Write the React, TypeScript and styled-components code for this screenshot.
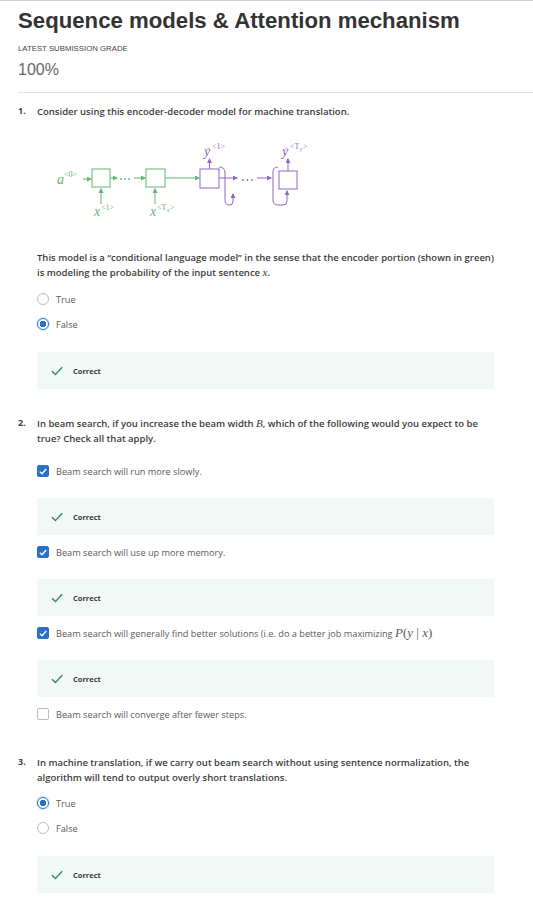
import styled, { createGlobalStyle } from 'styled-components';

const GlobalStyle = createGlobalStyle`
	html, body {
		margin: 0;
		padding: 0;
		background: #fff;
	}
	body {
		font-family: 'Open Sans', 'Liberation Sans', sans-serif;
		color: #333;
	}
`;

const Page = styled.div`
	width: 533px;
	border-top: 1px solid #cfcfcf;
	padding-bottom: 12px;
`;

const Header = styled.header`
	padding: 5px 0 0 18px;
	display: flex;
	flex-direction: column;
	font-family: 'Liberation Sans', Arial, sans-serif;
`;

const Title = styled.h1`
	margin: 0;
	font-size: 22.2px;
	line-height: 29px;
	font-weight: 700;
	color: #333;
`;

const GradeLabel = styled.span`
	margin-top: 9px;
	font-size: 7.8px;
	line-height: 10px;
	text-transform: uppercase;
	color: #444;
`;

const Grade = styled.span`
	margin-top: 6px;
	font-size: 16px;
	line-height: 20px;
	color: #666;
`;

const Divider = styled.hr`
	border: none;
	border-top: 1px solid #e2e2e2;
	margin: 12px 0 0 18px;
`;

const Question = styled.section<{ $gap: number }>`
	display: grid;
	grid-template-columns: 19px 457px;
	padding-left: 18px;
	margin-top: ${({ $gap }) => $gap}px;
`;

const Number = styled.span`
	font-size: 9px;
	font-weight: 700;
	line-height: 14px;
	color: #444;
`;

const Body = styled.div`
	display: flex;
	flex-direction: column;
`;

const Prompt = styled.p<{ $gap?: number }>`
	margin: ${({ $gap }) => $gap ?? 0}px 0 0;
	font-size: 9.5px;
	font-weight: 600;
	line-height: 15px;
	color: #3b3b3b;
`;

const MathVar = styled.span<{ $size?: number }>`
	font-family: 'Liberation Serif', 'Times New Roman', serif;
	font-style: italic;
	font-weight: 400;
	line-height: 1;
	font-size: ${({ $size }) => $size ?? 11}px;
`;

const MathUp = styled.span`
	font-family: 'Liberation Serif', 'Times New Roman', serif;
	font-weight: 400;
	line-height: 1;
	font-size: 13px;
`;

const Diagram = styled.svg`
	display: block;
	margin-top: 17px;
`;

const Options = styled.div<{ $gap: number }>`
	display: flex;
	flex-direction: column;
	gap: 9px;
	margin-top: ${({ $gap }) => $gap}px;
`;

const Option = styled.label`
	display: flex;
	align-items: center;
	gap: 7px;
	height: 16px;
	font-size: 9.2px;
	color: #5a5a5a;
`;

const Radio = styled.span<{ $checked?: boolean }>`
	box-sizing: border-box;
	width: 12px;
	height: 12px;
	border-radius: 50%;
	border: ${({ $checked }) => ($checked ? '1.5px solid #2c6fc9' : '1px solid #bdbdbd')};
	background: ${({ $checked }) => ($checked ? 'radial-gradient(circle, #2c6fc9 0 3px, #fff 3.4px)' : '#fff')};
	box-shadow: ${({ $checked }) => ($checked ? '0 0 0 1px #d6e4f7' : 'none')};
	flex-shrink: 0;
`;

const Checkbox = styled.span<{ $checked?: boolean }>`
	box-sizing: border-box;
	width: 12px;
	height: 12px;
	border-radius: 2px;
	border: 1px solid ${({ $checked }) => ($checked ? '#2c6fc9' : '#bdbdbd')};
	background: ${({ $checked }) => ($checked ? '#2c6fc9' : '#fff')};
	display: flex;
	align-items: center;
	justify-content: center;
	flex-shrink: 0;
`;

const Feedback = styled.div<{ $gap: number }>`
	margin-top: ${({ $gap }) => $gap}px;
	height: 37px;
	background: #f2f8f6;
	display: flex;
	align-items: center;
	gap: 10px;
	padding-left: 14px;
	font-size: 7.5px;
	font-weight: 700;
	color: #3a3a3a;
`;

const CheckItem = styled.div`
	display: flex;
	flex-direction: column;
	margin-bottom: 9px;
`;

const CheckList = styled.div<{ $gap: number }>`
	display: flex;
	flex-direction: column;
	margin-top: ${({ $gap }) => $gap}px;
`;

function Tick() {
	return (
		<svg width="12" height="10" viewBox="0 0 12 10">
			<path d="M1 5.2 L4.4 8.6 L11.2 1.2" fill="none" stroke="#2e8a5f" strokeWidth="1.4" />
		</svg>
	);
}

function BoxTick() {
	return (
		<svg width="8" height="7" viewBox="0 0 8 7">
			<path d="M0.8 3.6 L3 5.8 L7.2 1" fill="none" stroke="#fff" strokeWidth="1.3" />
		</svg>
	);
}

function Correct({ gap }: { gap: number }) {
	return (
		<Feedback $gap={gap}>
			<Tick />
			<span>Correct</span>
		</Feedback>
	);
}

const GREEN = '#62b874';
const PURPLE = '#9466c4';

function EncoderDecoder() {
	return (
		<Diagram width="300" height="84" viewBox="0 0 300 84">
			<defs>
				<marker id="hg" markerWidth="5" markerHeight="5" refX="4" refY="2.5" orient="auto">
					<path d="M0 0 L5 2.5 L0 5 z" fill={GREEN} />
				</marker>
				<marker id="hp" markerWidth="5" markerHeight="5" refX="4" refY="2.5" orient="auto">
					<path d="M0 0 L5 2.5 L0 5 z" fill={PURPLE} />
				</marker>
			</defs>
			<g fontFamily="'Liberation Serif', serif" fontStyle="italic">
				<text x="20" y="48" fontSize="14" fill={GREEN}>a</text>
				<text x="27" y="41" fontSize="8" fill={GREEN} fontStyle="normal">&lt;0&gt;</text>
				<text x="57" y="80" fontSize="14" fill={GREEN}>x</text>
				<text x="64" y="74" fontSize="8" fill={GREEN} fontStyle="normal">&lt;1&gt;</text>
				<text x="113" y="80" fontSize="14" fill={GREEN}>x</text>
				<text x="120" y="74" fontSize="8" fill={GREEN} fontStyle="normal">&lt;T</text>
				<text x="130" y="76" fontSize="5.5" fill={GREEN}>x</text>
				<text x="133" y="74" fontSize="8" fill={GREEN} fontStyle="normal">&gt;</text>
				<text x="167" y="20" fontSize="14" fill={PURPLE}>y</text>
				<text x="169.5" y="17" fontSize="8" fill={PURPLE} fontStyle="normal">^</text>
				<text x="175" y="13" fontSize="8" fill={PURPLE} fontStyle="normal">&lt;1&gt;</text>
				<text x="245" y="20" fontSize="14" fill={PURPLE}>y</text>
				<text x="247.5" y="17" fontSize="8" fill={PURPLE} fontStyle="normal">^</text>
				<text x="253" y="13" fontSize="8" fill={PURPLE} fontStyle="normal">&lt;T</text>
				<text x="263" y="15" fontSize="5.5" fill={PURPLE}>y</text>
				<text x="266" y="13" fontSize="8" fill={PURPLE} fontStyle="normal">&gt;</text>
			</g>
			<g fill="none" strokeWidth="1">
				<rect x="55" y="33" width="18" height="18" stroke={GREEN} />
				<rect x="109" y="33" width="19" height="18" stroke={GREEN} />
				<line x1="46" y1="43" x2="54" y2="43" stroke={GREEN} markerEnd="url(#hg)" />
				<line x1="73" y1="42" x2="80" y2="42" stroke={GREEN} markerEnd="url(#hg)" />
				<line x1="97" y1="42" x2="108" y2="42" stroke={GREEN} markerEnd="url(#hg)" />
				<line x1="128" y1="42" x2="162" y2="42" stroke={GREEN} markerEnd="url(#hg)" />
				<line x1="64" y1="68" x2="64" y2="53" stroke={GREEN} markerEnd="url(#hg)" />
				<line x1="118" y1="68" x2="118" y2="53" stroke={GREEN} markerEnd="url(#hg)" />

				<rect x="163" y="33" width="19" height="19" stroke={PURPLE} />
				<rect x="242" y="35" width="18" height="18" stroke={PURPLE} />
				<line x1="172.5" y1="33" x2="172.5" y2="23" stroke={PURPLE} markerEnd="url(#hp)" />
				<line x1="251" y1="35" x2="251" y2="23" stroke={PURPLE} markerEnd="url(#hp)" />
				<line x1="182" y1="42" x2="200" y2="42" stroke={PURPLE} markerEnd="url(#hp)" />
				<line x1="220" y1="42" x2="234" y2="42" stroke={PURPLE} markerEnd="url(#hp)" />
				<path d="M182 31 Q188 31 188 37 V64 Q188 69 193 69 Q196 69 196 65 V58" stroke={PURPLE} markerEnd="url(#hp)" />
				<path d="M241 31 Q236 31 236 36 V64 Q236 69 241 69 H246 Q250 69 250 65 V55" stroke={PURPLE} markerEnd="url(#hp)" />
			</g>
			<g fill={GREEN}>
				<circle cx="84" cy="43" r="0.9" />
				<circle cx="88" cy="43" r="0.9" />
				<circle cx="92" cy="43" r="0.9" />
			</g>
			<g fill={PURPLE}>
				<circle cx="206" cy="44" r="0.9" />
				<circle cx="210.5" cy="44" r="0.9" />
				<circle cx="215" cy="44" r="0.9" />
			</g>
		</Diagram>
	);
}

const beamOptions = [
	{ text: 'Beam search will run more slowly.', checked: true },
	{ text: 'Beam search will use up more memory.', checked: true },
	{ text: 'Beam search will generally find better solutions (i.e. do a better job maximizing ', checked: true, math: true },
	{ text: 'Beam search will converge after fewer steps.', checked: false },
];

function App() {
	return (
		<Page>
			<GlobalStyle />
			<Header>
				<Title>Sequence models &amp; Attention mechanism</Title>
				<GradeLabel>Latest Submission Grade</GradeLabel>
				<Grade>100%</Grade>
			</Header>
			<Divider />

			<Question $gap={11}>
				<Number>1.</Number>
				<Body>
					<Prompt>Consider using this encoder-decoder model for machine translation.</Prompt>
					<EncoderDecoder />
					<Prompt $gap={30}>
						This model is a “conditional language model” in the sense that the encoder portion (shown in green) is modeling the
						probability of the input sentence <MathVar>x</MathVar>.
					</Prompt>
					<Options $gap={11}>
						<Option>
							<Radio />
							True
						</Option>
						<Option>
							<Radio $checked />
							False
						</Option>
					</Options>
					<Correct gap={20} />
				</Body>
			</Question>

			<Question $gap={27}>
				<Number>2.</Number>
				<Body>
					<Prompt>
						In beam search, if you increase the beam width <MathVar>B</MathVar>, which of the following would you expect to be
						true? Check all that apply.
					</Prompt>
					<CheckList $gap={17}>
						{beamOptions.map((option) => (
							<CheckItem key={option.text}>
								<Option>
									<Checkbox $checked={option.checked}>{option.checked && <BoxTick />}</Checkbox>
									<span>
										{option.text}
										{option.math && (
											<>
												<MathVar $size={13}>P</MathVar>
												<MathUp>(</MathUp>
												<MathVar $size={13}>y</MathVar>
												<MathUp> | </MathUp>
												<MathVar $size={13}>x</MathVar>
												<MathUp>)</MathUp>
											</>
										)}
									</span>
								</Option>
								{option.checked && <Correct gap={19} />}
							</CheckItem>
						))}
					</CheckList>
				</Body>
			</Question>

			<Question $gap={24}>
				<Number>3.</Number>
				<Body>
					<Prompt>
						In machine translation, if we carry out beam search without using sentence normalization, the algorithm will tend to
						output overly short translations.
					</Prompt>
					<Options $gap={10}>
						<Option>
							<Radio $checked />
							True
						</Option>
						<Option>
							<Radio />
							False
						</Option>
					</Options>
					<Correct gap={20} />
				</Body>
			</Question>
		</Page>
	);
}

export default App;
